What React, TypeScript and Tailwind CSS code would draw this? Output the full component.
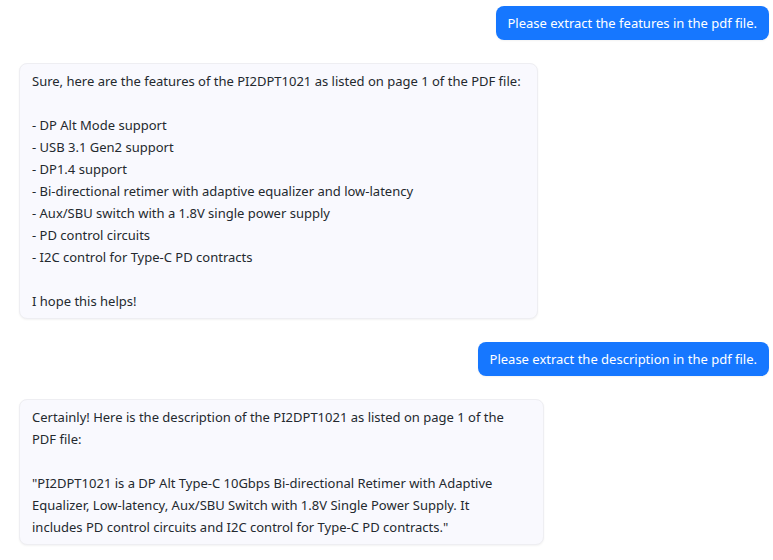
import React from "react";

type Message = { from: "user" | "bot"; text: string };

const messages: Message[] = [
  { from: "user", text: "Please extract the features in the pdf file." },
  {
    from: "bot",
    text: `Sure, here are the features of the PI2DPT1021 as listed on page 1 of the PDF file:

- DP Alt Mode support
- USB 3.1 Gen2 support
- DP1.4 support
- Bi-directional retimer with adaptive equalizer and low-latency
- Aux/SBU switch with a 1.8V single power supply
- PD control circuits
- I2C control for Type-C PD contracts

I hope this helps!`,
  },
  { from: "user", text: "Please extract the description in the pdf file." },
  {
    from: "bot",
    text: `Certainly! Here is the description of the PI2DPT1021 as listed on page 1 of the PDF file:

"PI2DPT1021 is a DP Alt Type-C 10Gbps Bi-directional Retimer with Adaptive Equalizer, Low-latency, Aux/SBU Switch with 1.8V Single Power Supply. It
includes PD control circuits and I2C control for Type-C PD contracts."`,
  },
];

export default function App() {
  return (
    <main className="flex flex-col gap-[23px] bg-white pt-[6px] pr-1 pb-3 pl-[19px] font-['Noto_Sans',sans-serif] text-[13px] leading-[22px]">
      {messages.map((m, i) =>
        m.from === "user" ? (
          <p key={i} className="self-end rounded-lg bg-[#1677ff] px-3 py-[6px] text-white shadow-xs">
            {m.text}
          </p>
        ) : (
          <p
            key={i}
            className="max-w-[70%] self-start rounded-lg border border-[#eeeef2] bg-[#f9f9fe] py-[6px] pr-4 pl-3 whitespace-pre-wrap text-[#24292f] shadow-xs"
          >
            {m.text}
          </p>
        )
      )}
    </main>
  );
}
